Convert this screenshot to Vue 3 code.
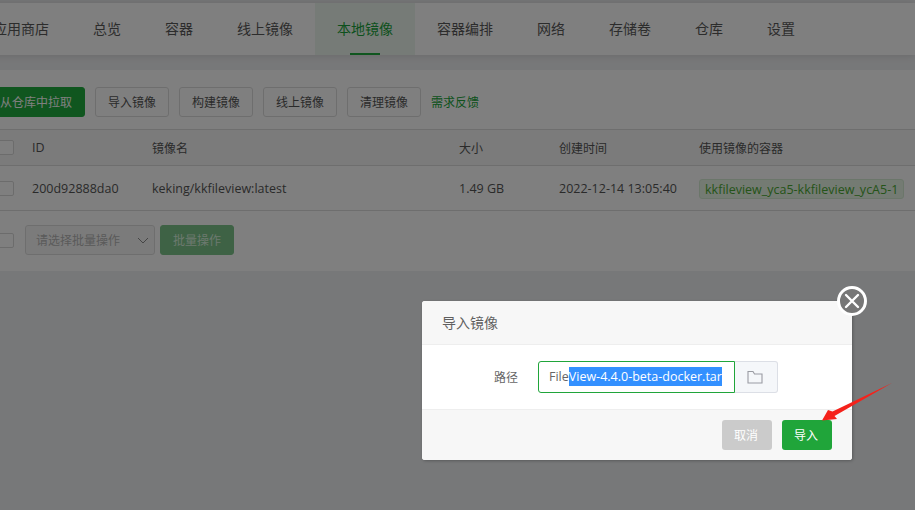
<script setup>
const tabs = ['应用商店', '总览', '容器', '线上镜像', '本地镜像', '容器编排', '网络', '存储卷', '仓库', '设置']
const actions = ['导入镜像', '构建镜像', '线上镜像', '清理镜像']
</script>

<template>
  <div class="page">
    <nav class="nav">
      <div v-for="t in tabs" :key="t" class="tab" :class="{ active: t === '本地镜像' }">{{ t }}</div>
    </nav>
    <section class="card">
      <div class="toolbar">
        <button class="btn primary">从仓库中拉取</button>
        <button v-for="a in actions" :key="a" class="btn">{{ a }}</button>
        <span class="link">需求反馈</span>
      </div>
      <div class="row head">
        <span class="check"></span><span class="latin">ID</span><span>镜像名</span><span>大小</span><span>创建时间</span><span>使用镜像的容器</span>
      </div>
      <div class="row body-row latin">
        <span class="check"></span><span>200d92888da0</span><span>keking/kkfileview:latest</span><span>1.49 GB</span><span>2022-12-14 13:05:40</span>
        <span><span class="tag">kkfileview_yca5-kkfileview_ycA5-1</span></span>
      </div>
      <div class="batch">
        <span class="check"></span>
        <div class="select">请选择批量操作
          <svg width="12" height="7" viewBox="0 0 12 7"><path d="M1 1l5 5 5-5" fill="none" stroke="#8b8b8b" stroke-width="1"/></svg>
        </div>
        <button class="btn batch-btn">批量操作</button>
      </div>
    </section>

    <div class="mask"></div>

    <div class="dialog">
      <div class="d-head">导入镜像</div>
      <div class="d-body">
        <label>路径</label>
        <div class="input"><span class="input-text">File<span class="sel">View-4.4.0-beta-docker.tar</span></span></div>
        <div class="folder">
          <svg width="16" height="14" viewBox="0 0 16 14"><path d="M1 1.500h5l1.500 2.500H15v9H1z" fill="none" stroke="#9a9ca3" stroke-width="1.100"/></svg>
        </div>
      </div>
      <div class="d-foot">
        <button class="d-btn cancel">取消</button>
        <button class="d-btn ok">导入</button>
      </div>
      <div class="close">
        <svg width="16" height="16" viewBox="0 0 16 16"><path d="M2 2l12 12M14 2L2 14" stroke="#fff" stroke-width="2.400" stroke-linecap="round"/></svg>
      </div>
    </div>

    <svg class="arrow" width="80" height="50" viewBox="0 0 80 50">
      <path d="M73 1L13.500 29.500L9 28L3 38.500L18 37L15.500 34Z" fill="#f5221b"/>
    </svg>
  </div>
</template>

<style>
html, body { margin: 0; overflow: hidden; }
</style>

<style scoped>
.page {
  position: relative;
  width: 915px;
  height: 510px;
  overflow: hidden;
  background: #eff0f2;
  padding-top: 3px;
  box-sizing: border-box;
  font-family: "Open Sans", "Noto Sans CJK SC", sans-serif;
  font-size: 12px;
  color: #555;
}
.nav {
  display: flex;
  height: 52px;
  margin-left: -29px;
  background: #fff;
  box-shadow: 0 0 8px rgba(0, 0, 0, 0.14);
}
.tab {
  position: relative;
  padding: 0 22px;
  font-size: 14px;
  line-height: 52px;
  color: #595959;
  white-space: nowrap;
}
.tab.active { background: #ecf6ee; color: #1aa33b; }
.tab.active::after {
  content: "";
  position: absolute;
  left: 35px;
  bottom: 0;
  width: 30px;
  height: 2px;
  background: #20ad3f;
}
.card {
  margin: 15px 0 0 -13px;
  height: 201px;
  background: #fff;
}
.latin { font-size: 12.500px; }
.toolbar {
  display: flex;
  align-items: center;
  gap: 10px;
  height: 59px;
  padding-top: 5px;
  box-sizing: border-box;
}
.btn {
  height: 30px;
  padding: 0 12px;
  border: 1px solid #ddd;
  border-radius: 3px;
  background: #fff;
  color: #555;
  font: inherit;
  white-space: nowrap;
}
.btn.primary { background: #20ad3f; border-color: #20ad3f; color: #fff; }
.link { color: #20a53a; }
.row {
  display: grid;
  grid-template-columns: 45px 120px 307px 100px 140px 1fr;
  align-items: center;
  border-top: 1px solid #ddd;
}
.head { height: 36px; box-sizing: border-box; background: #f7f7f7; }
.body-row { height: 45px; box-sizing: border-box; }
.check {
  display: block;
  width: 16px;
  height: 15px;
  border: 1px solid #d9d9d9;
  border-radius: 2px;
  background: #fff;
  box-sizing: border-box;
  margin-left: 11px;
}
.tag {
  display: inline-block;
  height: 20px;
  line-height: 19px;
  padding: 0 5px;
  margin-top: 1px;
  box-sizing: border-box;
  background: #e8f6e6;
  border: 1px solid #d7ecd5;
  border-radius: 3px;
  color: #4aa832;
  white-space: nowrap;
}
.batch {
  display: flex;
  align-items: center;
  height: 61px;
  box-sizing: border-box;
  border-top: 1px solid #ddd;
  padding-bottom: 2px;
}
.select {
  display: flex;
  align-items: center;
  justify-content: space-between;
  width: 130px;
  height: 30px;
  margin-left: 11px;
  padding: 0 5px 0 10px;
  box-sizing: border-box;
  border: 1px solid #ddd;
  border-radius: 3px;
  background: #f7f7f7;
  color: #b5b5b5;
  white-space: nowrap;
}
.batch-btn {
  margin-left: 5px;
  background: #7cc48a;
  border-color: #7cc48a;
  color: #d9f2de;
}
.mask {
  position: absolute;
  inset: 0;
  background: rgba(0, 0, 0, 0.5);
}
.dialog {
  position: absolute;
  left: 422px;
  top: 301px;
  width: 430px;
  height: 159px;
  border-radius: 3px;
  background: #fff;
  box-shadow: 1px 1px 3px rgba(0, 0, 0, 0.25);
  display: flex;
  flex-direction: column;
}
.d-head {
  height: 44px;
  box-sizing: border-box;
  padding-left: 20px;
  line-height: 43px;
  font-size: 14px;
  color: #5f5f5f;
  background: #f7f7f7;
  border-bottom: 1px solid #eee;
  border-radius: 3px 3px 0 0;
}
.d-body {
  display: flex;
  align-items: center;
  height: 64px;
  box-sizing: border-box;
  color: #666;
}
.d-body label {
  width: 96px;
  text-align: right;
  font-size: 12px;
  flex: none;
}
.input {
  margin-left: 20px;
  width: 197px;
  height: 32px;
  box-sizing: border-box;
  border: 1px solid #20a53a;
  border-radius: 3px 0 0 3px;
  padding-left: 10px;
  overflow: hidden;
  line-height: 30px;
  white-space: nowrap;
  font-size: 12.500px;
  color: #666;
  flex: none;
}
.input-text { display: block; width: 180px; overflow: hidden; }
.sel { background: #3390ff; color: #fff; padding: 1px 0; }
.folder {
  width: 43px;
  height: 32px;
  box-sizing: border-box;
  border: 1px solid #dcdfe6;
  border-left: 0;
  border-radius: 0 3px 3px 0;
  background: #f5f7fa;
  display: flex;
  align-items: center;
  justify-content: center;
  padding-right: 2px;
  flex: none;
}
.d-foot {
  flex: 1;
  display: flex;
  justify-content: flex-end;
  gap: 10px;
  padding: 10px 20px 0 0;
  box-sizing: border-box;
  background: #f7f7f7;
  border-top: 1px solid #eee;
  border-radius: 0 0 3px 3px;
}
.d-btn {
  width: 50px;
  height: 30px;
  border: 0;
  border-radius: 3px;
  padding: 0 2px 0 0;
  font: inherit;
  color: #fff;
}
.cancel { background: #cbcbcb; }
.ok { background: #20a53a; }
.close {
  position: absolute;
  right: -15px;
  top: -15px;
  width: 30px;
  height: 30px;
  box-sizing: border-box;
  border: 3px solid #fff;
  border-radius: 50%;
  background: #777;
  display: flex;
  align-items: center;
  justify-content: center;
}
.arrow {
  position: absolute;
  left: 819px;
  top: 382px;
}
</style>
